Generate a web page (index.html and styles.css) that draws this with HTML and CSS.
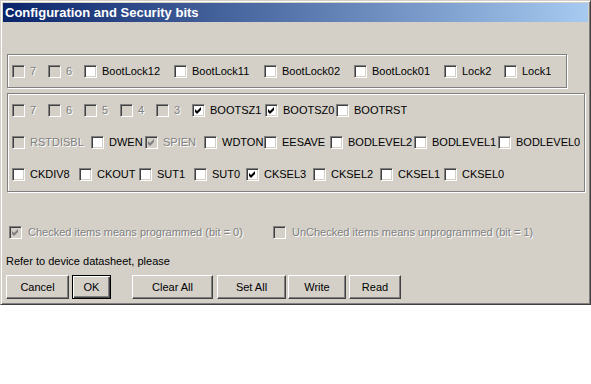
FILE: index.html
```html
<!DOCTYPE html>
<html lang="en">
<head>
    <meta charset="UTF-8">
    <title>Configuration and Security bits</title>
    <link rel="stylesheet" href="styles.css">
</head>
<body>
    <div class="window">
        <div class="titlebar">Configuration and Security bits</div>
        <div class="client">

            <!-- lock bits -->
            <div class="group g1">
                <div class="row">
                    <div class="item w36"><span class="cb off"></span><span class="lbl dim">7</span></div>
                    <div class="item w36"><span class="cb off"></span><span class="lbl dim">6</span></div>
                    <div class="item w90"><span class="cb"></span><span class="lbl">BootLock12</span></div>
                    <div class="item w90"><span class="cb"></span><span class="lbl">BootLock11</span></div>
                    <div class="item w90"><span class="cb"></span><span class="lbl">BootLock02</span></div>
                    <div class="item w90"><span class="cb"></span><span class="lbl">BootLock01</span></div>
                    <div class="item w60"><span class="cb"></span><span class="lbl">Lock2</span></div>
                    <div class="item"><span class="cb"></span><span class="lbl">Lock1</span></div>
                </div>
            </div>

            <!-- fuse bits -->
            <div class="group g2">
                <div class="row">
                    <div class="item w36"><span class="cb off"></span><span class="lbl dim">7</span></div>
                    <div class="item w36"><span class="cb off"></span><span class="lbl dim">6</span></div>
                    <div class="item w36"><span class="cb off"></span><span class="lbl dim">5</span></div>
                    <div class="item w36"><span class="cb off"></span><span class="lbl dim">4</span></div>
                    <div class="item w36"><span class="cb off"></span><span class="lbl dim">3</span></div>
                    <div class="item w73"><span class="cb"><svg viewBox="0 0 13 13"><polygon points="3,5 5,7 9,3 9,6 5,10 3,8"/></svg></span><span class="lbl">BOOTSZ1</span></div>
                    <div class="item w71"><span class="cb"><svg viewBox="0 0 13 13"><polygon points="3,5 5,7 9,3 9,6 5,10 3,8"/></svg></span><span class="lbl">BOOTSZ0</span></div>
                    <div class="item"><span class="cb"></span><span class="lbl">BOOTRST</span></div>
                </div>
                <div class="row">
                    <div class="item w79"><span class="cb off"></span><span class="lbl dim">RSTDISBL</span></div>
                    <div class="item w54"><span class="cb"></span><span class="lbl">DWEN</span></div>
                    <div class="item w59"><span class="cb off"><svg viewBox="0 0 13 13"><polygon points="3,5 5,7 9,3 9,6 5,10 3,8"/></svg></span><span class="lbl dim">SPIEN</span></div>
                    <div class="item w60"><span class="cb"></span><span class="lbl">WDTON</span></div>
                    <div class="item w66"><span class="cb"></span><span class="lbl">EESAVE</span></div>
                    <div class="item w84"><span class="cb"></span><span class="lbl">BODLEVEL2</span></div>
                    <div class="item w84"><span class="cb"></span><span class="lbl">BODLEVEL1</span></div>
                    <div class="item"><span class="cb"></span><span class="lbl">BODLEVEL0</span></div>
                </div>
                <div class="row">
                    <div class="item w67"><span class="cb"></span><span class="lbl">CKDIV8</span></div>
                    <div class="item w60"><span class="cb"></span><span class="lbl">CKOUT</span></div>
                    <div class="item w55"><span class="cb"></span><span class="lbl">SUT1</span></div>
                    <div class="item w52"><span class="cb"></span><span class="lbl">SUT0</span></div>
                    <div class="item w67"><span class="cb"><svg viewBox="0 0 13 13"><polygon points="3,5 5,7 9,3 9,6 5,10 3,8"/></svg></span><span class="lbl">CKSEL3</span></div>
                    <div class="item w67"><span class="cb"></span><span class="lbl">CKSEL2</span></div>
                    <div class="item w64"><span class="cb"></span><span class="lbl">CKSEL1</span></div>
                    <div class="item"><span class="cb"></span><span class="lbl">CKSEL0</span></div>
                </div>
            </div>

            <div class="legend">
                <div class="item w264"><span class="cb off"><svg viewBox="0 0 13 13"><polygon points="3,5 5,7 9,3 9,6 5,10 3,8"/></svg></span><span class="lbl wide dim">Checked items means programmed (bit = 0)</span></div>
                <div class="item"><span class="cb off"></span><span class="lbl wide dim">UnChecked items means unprogrammed (bit = 1)</span></div>
            </div>

            <div class="note">Refer to device datasheet, please</div>

            <div class="buttons">
                <button class="btn b-cancel">Cancel</button>
                <button class="btn b-ok default">OK</button>
                <button class="btn b-clear">Clear All</button>
                <button class="btn b-set">Set All</button>
                <button class="btn b-write">Write</button>
                <button class="btn b-read">Read</button>
            </div>
        </div>
    </div>
</body>
</html>
```

FILE: styles.css
```css
body {
    margin: 0;
    background: #fff;
    font-family: "Liberation Sans", Arial, sans-serif;
    font-size: 11px;
}
.window {
    width: 591px;
    height: 305px;
    box-sizing: border-box;
    background: #d4d0c8;
    border: 1px solid;
    border-color: #d4d0c8 #404040 #404040 #d4d0c8;
    box-shadow: inset 1px 1px #fff, inset -1px -1px #808080;
    padding: 2px;
}
.titlebar {
    height: 19px;
    line-height: 19px;
    padding-left: 2px;
    color: #fff;
    font-weight: bold;
    font-size: 13px;
    background: linear-gradient(to right, #0a246a, #a6caf0);
}
.group {
    border: 1px solid #808080;
    box-shadow: inset 1px 1px #fff, 1px 1px #fff;
    padding: 0 4px;
    margin-left: 4px;
}
.g1 {
    width: 550px;
    margin-top: 32px;
}
.g2 {
    width: 568px;
    margin-top: 5px;
    padding-bottom: 1px;
}
.row {
    display: flex;
    align-items: center;
    height: 32px;
}
.item {
    display: flex;
    align-items: center;
    flex-shrink: 0;
    overflow: hidden;
    white-space: nowrap;
}
.w36 { width: 36px; }
.w52 { width: 52px; }
.w54 { width: 54px; }
.w55 { width: 55px; }
.w59 { width: 59px; }
.w60 { width: 60px; }
.w64 { width: 64px; }
.w66 { width: 66px; }
.w67 { width: 67px; }
.w71 { width: 71px; }
.w73 { width: 73px; }
.w79 { width: 79px; }
.w84 { width: 84px; }
.w90 { width: 90px; }
.w264 { width: 264px; }
.cb {
    width: 13px;
    height: 13px;
    box-sizing: border-box;
    flex-shrink: 0;
    background: #fff;
    border: 1px solid;
    border-color: #808080 #fff #fff #808080;
    box-shadow: inset 1px 1px #404040, inset -1px -1px #d4d0c8;
    position: relative;
}
.cb svg {
    position: absolute;
    left: -1px;
    top: -1px;
    width: 13px;
    height: 13px;
    fill: #000;
}
.cb.off {
    background: #d4d0c8;
}
.cb.off svg {
    fill: #808080;
}
.lbl {
    margin-left: 5px;
    color: #000;
}
.wide {
    margin-left: 6px;
}
.dim {
    color: #808080;
    text-shadow: 1px 1px #fff;
}
.legend {
    display: flex;
    align-items: center;
    height: 16px;
    margin-top: 32px;
    padding-left: 6px;
}
.note {
    margin-top: 14px;
    height: 14px;
    line-height: 14px;
    padding-left: 3px;
}
.buttons {
    display: flex;
    margin-top: 7px;
    padding-left: 3px;
}
.btn {
    height: 24px;
    box-sizing: border-box;
    padding: 0;
    font-family: "Liberation Sans", Arial, sans-serif;
    font-size: 11px;
    color: #000;
    background: #d4d0c8;
    border: 1px solid;
    border-color: #fff #404040 #404040 #fff;
    box-shadow: inset -1px -1px #808080;
}
.btn.default {
    border: 1px solid #000;
    box-shadow: inset 1px 1px #fff, inset -1px -1px #404040, inset -2px -2px #808080;
}
.b-cancel { width: 63px; }
.b-ok { width: 39px; margin-left: 3px; }
.b-clear { width: 81px; margin-left: 21px; }
.b-set { width: 69px; margin-left: 4px; }
.b-write { width: 58px; margin-left: 2px; }
.b-read { width: 52px; margin-left: 3px; }
```
